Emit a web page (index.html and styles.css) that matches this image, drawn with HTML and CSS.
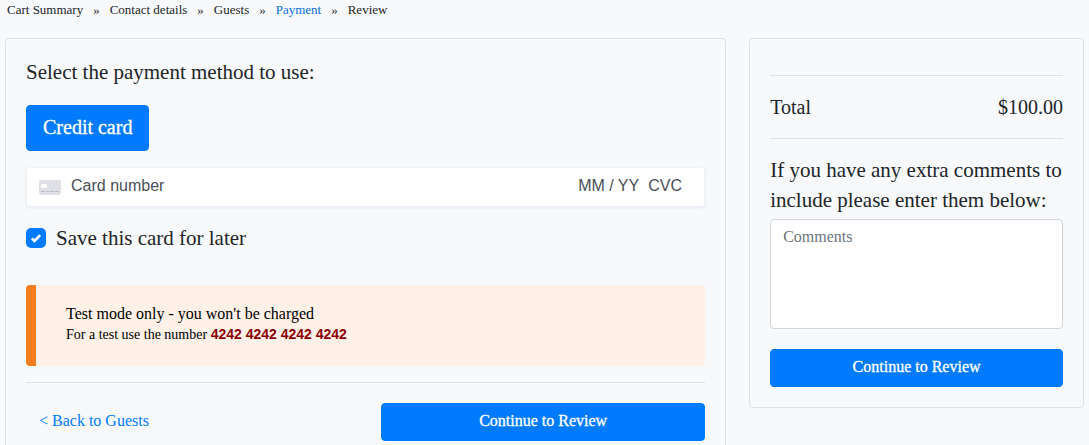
FILE: index.html
```html
<!DOCTYPE html>
<html lang="en">
<head>
<meta charset="utf-8">
<meta name="viewport" content="width=device-width, initial-scale=1">
<title>Payment</title>
<link rel="stylesheet" href="styles.css">
</head>
<body>
<nav class="steps" aria-label="Checkout steps">
  <span>Cart Summary</span><span>»</span><span>Contact details</span><span>»</span><span>Guests</span><span>»</span><span class="current" aria-current="step">Payment</span><span>»</span><span>Review</span>
</nav>
<main class="checkout">
  <form class="card payment">
    <p class="lead">Select the payment method to use:</p>
    <button type="button" class="btn btn-method">Credit card</button>
    <div class="card-field">
      <svg class="card-icon" viewBox="0 0 22 15" aria-hidden="true">
        <rect width="22" height="15" rx="2" fill="#dfe0e6"/>
        <rect x="2" y="4" width="6" height="4" rx="1" fill="#fff"/>
        <path d="M2 11.5h4M7 11.5h3M11 11.5h4M16 11.5h4" stroke="#b9bec8" stroke-width="1.2"/>
      </svg>
      <input class="number" type="text" placeholder="Card number" aria-label="Card number">
      <input class="expiry" type="text" placeholder="MM / YY" aria-label="Expiry date">
      <input class="cvc" type="text" placeholder="CVC" aria-label="CVC">
    </div>
    <div class="save">
      <span class="check">
        <input type="checkbox" id="save-card" checked>
        <svg viewBox="0 0 20 20" aria-hidden="true"><path d="M5.8 10.3l2.7 2.7 5.7-5.9" fill="none" stroke="#fff" stroke-width="2.6"/></svg>
      </span>
      <label for="save-card">Save this card for later</label>
    </div>
    <div class="notice">
      <p class="notice-title">Test mode only - you won't be charged</p>
      <p class="notice-text">For a test use the number <strong>4242 4242 4242 4242</strong></p>
    </div>
    <hr>
    <div class="actions">
      <a class="back" href="#guests">&lt; Back to Guests</a>
      <button type="submit" class="btn">Continue to Review</button>
    </div>
  </form>
  <form class="card summary">
    <hr>
    <div class="total"><span>Total</span><span>$100.00</span></div>
    <hr>
    <label class="comments-label" for="comments">If you have any extra comments to include please enter them below:</label>
    <textarea id="comments" rows="4" placeholder="Comments"></textarea>
    <button type="submit" class="btn">Continue to Review</button>
  </form>
</main>
</body>
</html>
```
FILE: styles.css
```css
* { box-sizing: border-box; }

body {
  margin: 0;
  background: #f8f9fb;
  color: #212529;
  font: 21px/30px "Liberation Serif", serif;
}

p { margin: 0; }

hr {
  width: 100%;
  margin: 16px 0;
  border: 0;
  border-top: 1px solid #dee0e3;
}

.steps {
  display: flex;
  flex-wrap: wrap;
  gap: 10px;
  padding: 0 7px;
  font-size: 13px;
  line-height: 20px;
}

.current { color: #0a6edb; }

.checkout {
  display: grid;
  grid-template-columns: minmax(0, 28fr) minmax(0, 13fr);
  align-items: start;
  gap: 23px;
  padding: 18px 5px;
}

.card {
  display: flex;
  flex-direction: column;
  padding: 20px;
  border: 1px solid #dee0e3;
  border-radius: 4px;
}

.payment { padding-top: 18px; }

.btn {
  padding: 5px 12px 7px;
  border: 1px solid #007bff;
  border-radius: 4px;
  background: #007bff;
  color: #fff;
  font: 16px/24px "Liberation Serif", serif;
  -webkit-text-stroke: 0.3px currentColor;
}

.btn-method {
  align-self: flex-start;
  margin: 18px 0 16px;
  padding: 6px 16px 8px;
  font-size: 20px;
  line-height: 30px;
}

.card-field {
  display: flex;
  align-items: center;
  height: 40px;
  padding: 0 12px;
  border: 1px solid transparent;
  border-radius: 4px;
  background: #fff;
  background-clip: padding-box;
  box-shadow: 0 1px 3px #e6ebf1;
}

.card-icon {
  flex: none;
  width: 22px;
  height: 15px;
  margin-right: 10px;
}

.card-field input {
  min-width: 0;
  padding: 0 0 2px;
  border: 0;
  background: none;
  font: 16px/20px "Liberation Sans", sans-serif;
}

.card-field input::placeholder { color: #495057; }
.card-field .number { flex: 1; }
.card-field .expiry { width: 70px; }
.card-field .cvc { width: 44px; }

.save {
  display: flex;
  align-items: center;
  gap: 10px;
  margin: 16px 0 32px;
}

.check {
  display: grid;
  width: 20px;
  height: 20px;
}

.check > * { grid-area: 1 / 1; }

.check input {
  width: 20px;
  height: 20px;
  margin: 0;
  border-radius: 5px;
  background: #007bff;
  appearance: none;
}

.check svg { pointer-events: none; }

.notice {
  padding: 18px 30px 22px;
  border-left: 10px solid #f67d20;
  border-radius: 4px;
  background: #fff0e8;
  color: #000;
}

.notice-title {
  font-size: 16px;
  line-height: 22px;
}

.notice-text {
  font-size: 14px;
  line-height: 19px;
}

.notice-text strong {
  color: #8b0000;
  font-family: "Liberation Sans", sans-serif;
}

.payment hr { margin-bottom: 20px; }

.actions {
  display: grid;
  grid-template-columns: 1fr 324px;
  align-items: center;
}

.back {
  padding: 0 13px 2px;
  color: #007bff;
  font-size: 16px;
  line-height: 24px;
  text-decoration: none;
}

.total {
  display: flex;
  justify-content: space-between;
  font-size: 20px;
}

textarea {
  display: block;
  height: 110px;
  margin: 4px 0 20px;
  padding: 5px 12px;
  border: 1px solid #ced4da;
  border-radius: 4px;
  background: #fff;
  font: 16px/24px "Liberation Serif", serif;
  resize: none;
}

textarea::placeholder { color: #6c757d; }
```
